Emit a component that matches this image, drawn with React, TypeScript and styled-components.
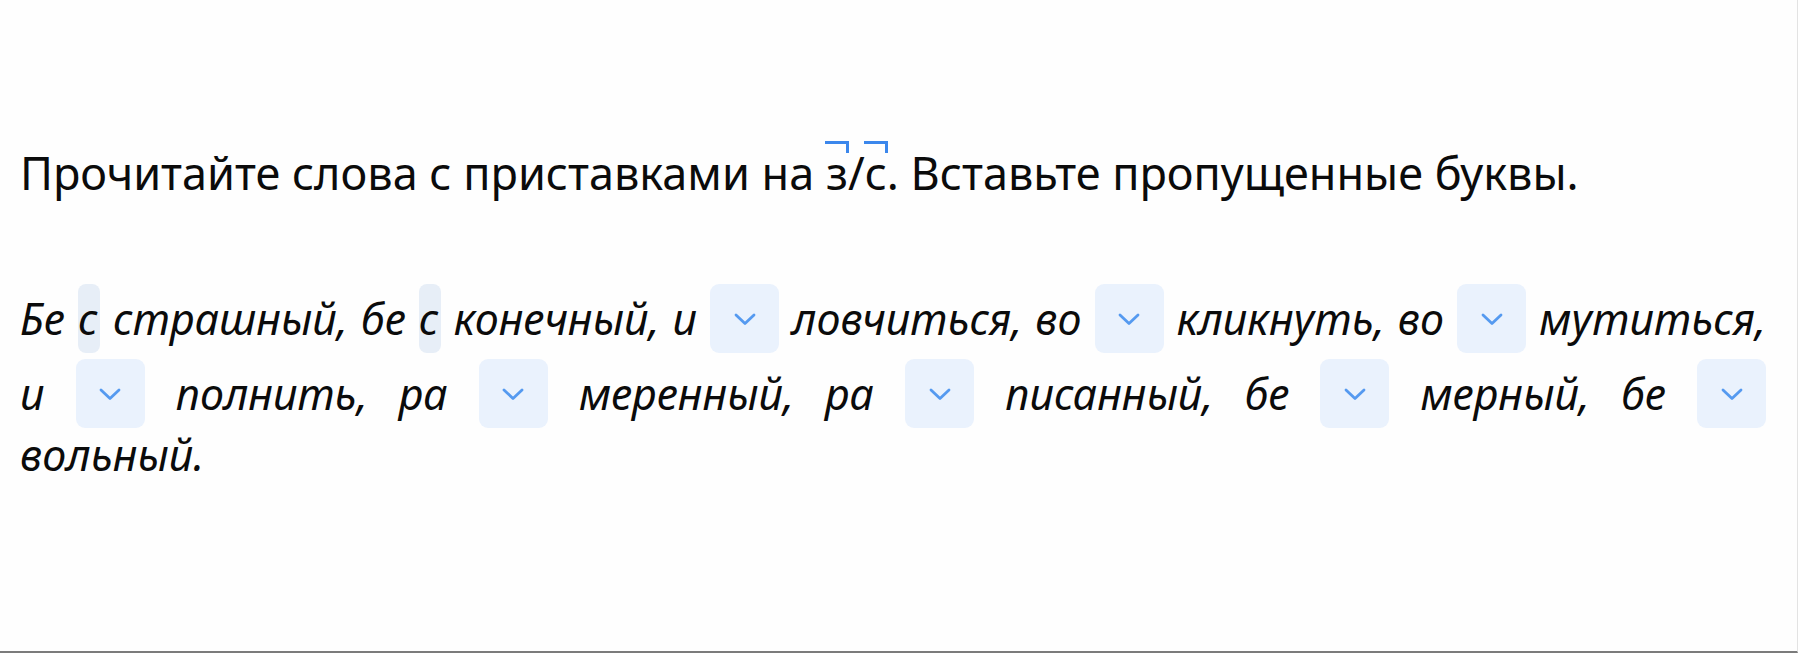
import React from 'react';
import styled, { createGlobalStyle } from 'styled-components';

const GlobalStyle = createGlobalStyle`
  html, body {
    margin: 0;
    padding: 0;
    background: #fefefe;
  }
  body {
    font-family: 'Noto Sans', 'Open Sans', sans-serif;
    color: #0b0b0b;
  }
`;

const Screen = styled.div`
  box-sizing: border-box;
  height: 653px;
  padding: 143px 31px 0 20px;
  border-right: 1px solid #e3e3e3;
  border-bottom: 2px solid #7b7b7b;
  overflow: hidden;
`;

const Instruction = styled.p`
  margin: 0 0 71px;
  font-size: 45px;
  line-height: 60px;
  white-space: nowrap;
`;

// letter with the blue corner mark drawn above it
const Marked = styled.span`
  position: relative;

  &::before {
    content: '';
    position: absolute;
    left: -1px;
    right: -1px;
    top: -1px;
    height: 9px;
    border-top: 3px solid #3b87ec;
    border-right: 3px solid #3b87ec;
  }
`;

const Exercise = styled.p`
  margin: 0;
  font-size: 43px;
  font-style: italic;
  line-height: 61px;
  text-align: justify;
  text-align-last: justify;
`;

const Filled = styled.span`
  display: inline-block;
  width: 22px;
  height: 69px;
  margin: 10px 0 -5px;
  line-height: 69px;
  text-align: center;
  border-radius: 8px;
  background: #e7eef7;
`;

const Gap = styled.span`
  display: inline-block;
  box-sizing: border-box;
  width: 69px;
  height: 69px;
  margin: 10px 0 -5px;
  padding-top: 28px;
  vertical-align: -13px;
  border-radius: 9px;
  background: #eaf2fd;
  cursor: pointer;

  svg {
    display: block;
    margin: 0 auto;
  }
`;

const Chevron = () => (
  <svg width="24" height="14" viewBox="0 0 24 14" fill="none">
    <polyline
      points="3,3 12,11.5 21,3"
      stroke="#559af0"
      strokeWidth="2.8"
      strokeLinecap="round"
      strokeLinejoin="round"
    />
  </svg>
);

const Blank = () => (
  <Gap>
    <Chevron />
  </Gap>
);

const App: React.FC = () => {
  return (
    <>
      <GlobalStyle />
      <Screen>
        <Instruction>
          Прочитайте слова с приставками на <Marked>з</Marked>/<Marked>с</Marked>. Вставьте пропущенные буквы.
        </Instruction>
        <Exercise>
          Бе <Filled>с</Filled> страшный, бе <Filled>с</Filled> конечный, и <Blank /> ловчиться, во <Blank /> кликнуть, во <Blank /> мутиться,
          <br />
          и <Blank /> полнить, ра <Blank /> меренный, ра <Blank /> писанный, бе <Blank /> мерный, бе <Blank />
          <br />
          вольный.
        </Exercise>
      </Screen>
    </>
  );
};

export default App;
